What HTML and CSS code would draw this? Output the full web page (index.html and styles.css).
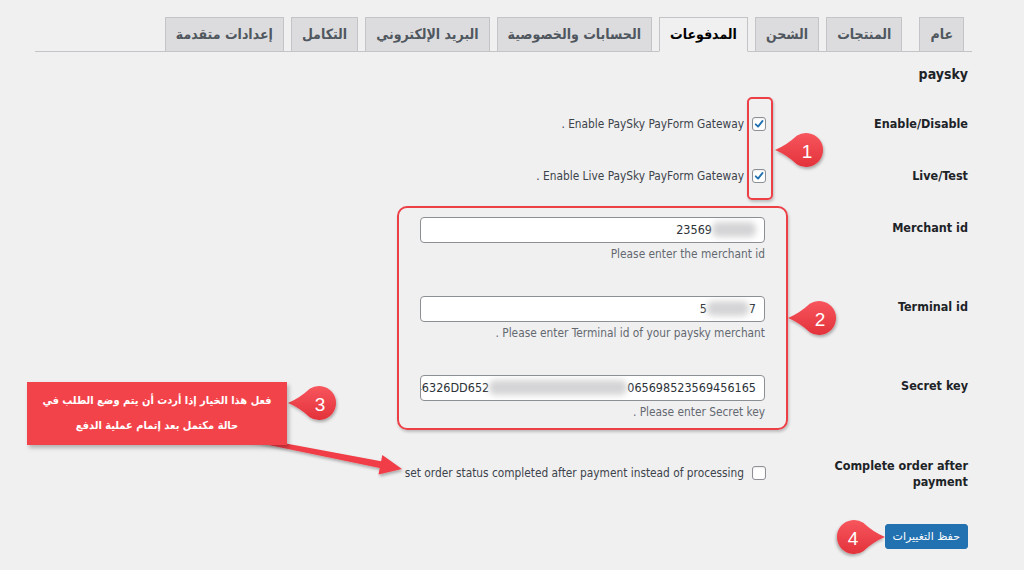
FILE: index.html
```html
<!DOCTYPE html>
<html lang="ar" dir="rtl">
<head>
<meta charset="utf-8">
<title>الإعدادات - المدفوعات</title>
<link rel="stylesheet" href="styles.css">
</head>
<body>
<div class="wrap">
  <nav class="tabs">
    <a class="tab first">عام</a>
    <a class="tab">المنتجات</a>
    <a class="tab">الشحن</a>
    <a class="tab active">المدفوعات</a>
    <a class="tab">الحسابات والخصوصية</a>
    <a class="tab">البريد الإلكتروني</a>
    <a class="tab">التكامل</a>
    <a class="tab">إعدادات متقدمة</a>
  </nav>

  <h2 class="title">paysky</h2>

  <div class="form">
    <div class="row row-check">
      <div class="label">Enable/Disable</div>
      <div class="field">
        <label class="check">
          <span class="box"><svg viewBox="0 0 14 14" width="14" height="14"><path d="M3.2 7.4 L5.9 10 L11 3.6" fill="none" stroke="#2271b1" stroke-width="2.2" stroke-linecap="round" stroke-linejoin="round"/></svg></span>
          <span class="check-text">Enable PaySky PayForm Gateway .</span>
        </label>
      </div>
    </div>

    <div class="row row-check">
      <div class="label">Live/Test</div>
      <div class="field">
        <label class="check">
          <span class="box"><svg viewBox="0 0 14 14" width="14" height="14"><path d="M3.2 7.4 L5.9 10 L11 3.6" fill="none" stroke="#2271b1" stroke-width="2.2" stroke-linecap="round" stroke-linejoin="round"/></svg></span>
          <span class="check-text">Enable Live PaySky PayForm Gateway .</span>
        </label>
      </div>
    </div>

    <div class="row row-input">
      <div class="label">Merchant id</div>
      <div class="field">
        <div class="input"><span class="val" dir="ltr">23569<i class="blur blur-m"></i></span></div>
        <p class="desc">Please enter the merchant id</p>
      </div>
    </div>

    <div class="row row-input">
      <div class="label">Terminal id</div>
      <div class="field">
        <div class="input"><span class="val" dir="ltr">5<i class="blur blur-t"></i>7</span></div>
        <p class="desc">Please enter Terminal id of your paysky merchant .</p>
      </div>
    </div>

    <div class="row row-input">
      <div class="label">Secret key</div>
      <div class="field">
        <div class="input"><span class="val" dir="ltr">AC46326DD652<i class="blur blur-s"></i>065698523569456165</span></div>
        <p class="desc">Please enter Secret key .</p>
      </div>
    </div>

    <div class="row row-last">
      <div class="label">Complete order after payment</div>
      <div class="field">
        <label class="check check-low">
          <span class="box"></span>
          <span class="check-text">set order status completed after payment instead of processing</span>
        </label>
      </div>
    </div>

    <div class="submit">
      <button class="button">حفظ التغييرات</button>
    </div>
  </div>
</div>

<!-- annotations -->
<div class="hl hl-1"></div>
<div class="hl hl-2"></div>
<div class="callout">فعل هذا الخيار إذا أردت أن يتم وضع الطلب في<br>حالة مكتمل بعد إتمام عملية الدفع</div>

<svg class="marks" width="1024" height="570" viewBox="0 0 1024 570">
  <defs>
    <linearGradient id="rg" x1="0" y1="0" x2="0" y2="1">
      <stop offset="0" stop-color="#f7565d"/>
      <stop offset="1" stop-color="#e3323b"/>
    </linearGradient>
    <filter id="sh" x="-40%" y="-40%" width="180%" height="190%">
      <feDropShadow dx="1" dy="2" stdDeviation="1.6" flood-color="#000" flood-opacity="0.3"/>
    </filter>
    <path id="drop" d="M-31 0 Q-19 -5 -9.3 -14.2 A17 17 0 1 1 -9.3 14.2 Q-19 5 -31 0 Z"/>
  </defs>
  <polygon points="240.4,435 381.1,461.3 382.3,454.9 402,469 378.5,474.5 379.7,468.1 239.6,439" fill="#f03e46" filter="url(#sh)"/>
  <use href="#drop" transform="translate(806 150)" fill="url(#rg)" filter="url(#sh)"/>
  <use href="#drop" transform="translate(819 318)" fill="url(#rg)" filter="url(#sh)"/>
  <use href="#drop" transform="translate(319 403)" fill="url(#rg)" filter="url(#sh)"/>
  <use href="#drop" transform="translate(854 537) scale(-1 1)" fill="url(#rg)" filter="url(#sh)"/>
  <g class="num">
    <text x="807" y="151">1</text>
    <text x="820" y="319">2</text>
    <text x="320" y="404">3</text>
    <text x="853" y="538">4</text>
  </g>
</svg>
</body>
</html>
```

FILE: styles.css
```css
* { box-sizing: border-box; }

html, body { margin: 0; padding: 0; }

body {
  width: 1024px;
  height: 570px;
  overflow: hidden;
  position: relative;
  background: #f0f0f1;
  color: #3c434a;
  font-family: "DejaVu Sans Condensed", "DejaVu Sans", sans-serif;
}

.wrap {
  margin: 0 52px 0 35px;
  padding-top: 17px;
}

/* tabs */
.tabs {
  display: flex;
  height: 35px;
  border-bottom: 1px solid #c3c4c7;
}

.tab {
  height: 35px;
  margin-left: 7px;
  padding: 0 10px;
  border: 1px solid #c3c4c7;
  background: #dcdcde;
  color: #50575e;
  font-size: 14px;
  font-weight: bold;
  line-height: 33px;
  white-space: nowrap;
  text-decoration: none;
}

.tab.first {
  margin-right: 8px;
  margin-left: 17px;
}

.tab.active {
  background: #f0f0f1;
  border-bottom-color: #f0f0f1;
  color: #000;
}

.title {
  margin: 12px 4px 14px 0;
  font-size: 14px;
  line-height: 20px;
  font-weight: bold;
  color: #1d2327;
  direction: ltr;
  text-align: right;
}

/* form */
.form {
  margin-right: 4px;
}

.row {
  display: grid;
  grid-template-columns: 192px 1fr;
  column-gap: 10px;
  align-items: start;
}

.row-check { padding: 16px 0; }
.row-input { padding: 15px 0 19px; }
.row-last { padding: 19px 0 0; }

.label {
  font-size: 12.5px;
  font-weight: bold;
  line-height: 20px;
  color: #1d2327;
  direction: ltr;
  text-align: right;
}

.row-input .label {
  padding-top: 1px;
}

.row-last .label {
  line-height: 16px;
}

.check {
  display: flex;
  align-items: center;
  gap: 8px;
  height: 20px;
  font-size: 11.8px;
  color: #3c434a;
}

.check-low {
  height: 14px;
  margin-top: 8px;
}

.box {
  flex: none;
  width: 14px;
  height: 14px;
  border: 1px solid #8c8f94;
  border-radius: 3px;
  background: #fff;
  display: flex;
  align-items: center;
  justify-content: center;
  box-shadow: inset 0 1px 2px rgba(0,0,0,0.08);
}

.box svg { display: block; }

.input {
  width: 345px;
  height: 26px;
  margin-right: 1px;
  padding: 0 8px;
  border: 1px solid #8c8f94;
  border-radius: 4px;
  background: #fff;
  overflow: hidden;
  white-space: nowrap;
  font-size: 12.5px;
  line-height: 24px;
  color: #2c3338;
}

.val { display: inline-block; }

.blur {
  display: inline-block;
  height: 15px;
  vertical-align: -3px;
  background: #d4d4d6;
  border-radius: 6px;
  filter: blur(3px);
}

.blur-m { width: 44px; }
.blur-t { width: 42px; }
.blur-s { width: 138px; }

.desc {
  margin: 3px 1px 0 0;
  font-size: 11.8px;
  line-height: 16px;
  color: #646970;
}

.submit {
  margin-top: 34px;
}

.button {
  height: 25px;
  padding: 0 7px;
  border: 1px solid #2271b1;
  border-radius: 3px;
  background: #2271b1;
  color: #fff;
  font-family: "DejaVu Sans", sans-serif;
  font-size: 11px;
  line-height: 23px;
}

/* annotations */
.hl {
  position: absolute;
  border: 2px solid #ec3f46;
  box-shadow: 1px 2px 3px rgba(0,0,0,0.22);
}

.hl-1 {
  left: 747px;
  top: 97px;
  width: 26px;
  height: 103px;
  border-radius: 5px;
}

.hl-2 {
  left: 397px;
  top: 206px;
  width: 391px;
  height: 224px;
  border-radius: 10px;
}

.callout {
  position: absolute;
  z-index: 3;
  left: 27px;
  top: 382px;
  width: 260px;
  height: 63px;
  padding-top: 6px;
  background: #f3434a;
  color: #fff;
  font-size: 11px;
  font-weight: bold;
  line-height: 25px;
  text-align: center;
  white-space: nowrap;
  box-shadow: 2px 3px 4px rgba(0,0,0,0.25);
}

.marks {
  position: absolute;
  left: 0;
  top: 0;
  z-index: 2;
  pointer-events: none;
}

.num text {
  fill: #fff;
  font-family: "Liberation Sans", Arial, sans-serif;
  font-size: 19px;
  text-anchor: middle;
  dominant-baseline: central;
}
```
